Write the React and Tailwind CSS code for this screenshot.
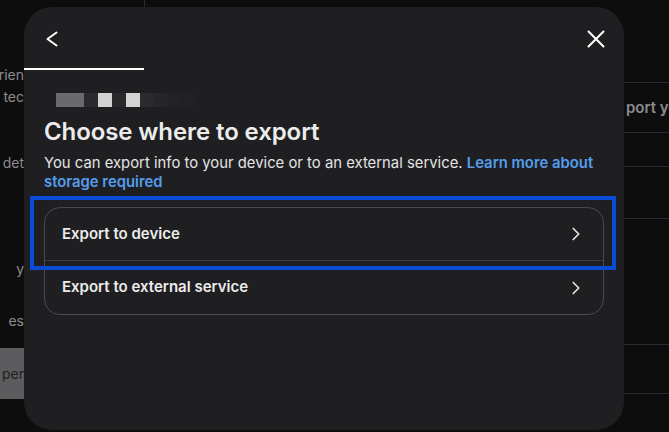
import { ChevronRight } from 'lucide-react';

const PIXELS = ['#6a6a6c', '#2b2b2d', '#d2d2d2', '#29292b', '#d4d4d4', '#2b2b2d', '#262628', '#232325', '#212123'];

function Bg() {
  return (
    <div className="flex h-[432px] w-full bg-[#0d0d0e]">
      {/* left sidebar, mostly hidden */}
      <div className="w-[24px] shrink-0 overflow-hidden text-[14px] text-[#8c8c8e]">
        <div className="h-[64px]" />
        <div className="flex justify-end whitespace-nowrap leading-[22px]">experien</div>
        <div className="flex justify-end whitespace-nowrap leading-[22px]">in tec</div>
        <div className="h-[44px]" />
        <div className="flex justify-end whitespace-nowrap leading-[22px]">Your det</div>
        <div className="h-[84px]" />
        <div className="flex justify-end whitespace-nowrap leading-[22px]">y</div>
        <div className="h-[30px]" />
        <div className="flex justify-end whitespace-nowrap leading-[22px]">es</div>
        <div className="h-[16px]" />
        <div className="flex h-[51px] items-center justify-end whitespace-nowrap bg-[#5c5c5e] text-[#1e1e20]">per</div>
      </div>
      <div className="flex-1">
        <div className="ml-[120px] h-[8px] w-px bg-[#2a2a2c]" />
      </div>
      {/* right column, mostly hidden */}
      <div className="w-[45px] shrink-0 overflow-hidden">
        <div className="h-[82px]" />
        <div className="flex h-[51px] items-center whitespace-nowrap border-y border-[#2a2a2c] pl-[2px] pt-[2px] text-[15px] font-semibold text-[#8c8c8e]">
          port your
        </div>
        <div className="h-[33px]" />
        <div className="h-[53px] border-y border-[#2a2a2c]" />
        <div className="h-[125px]" />
        <div className="h-[50px] border-y border-[#2a2a2c]" />
      </div>
    </div>
  );
}

function Opcion({ label, last }) {
  return (
    <button
      className={`flex h-[53px] w-full items-center justify-between pl-[17px] pr-[16px] text-left ${
        last ? '' : 'border-b border-[#3e3e40]'
      }`}
    >
      <span className="text-[15px] font-semibold text-[#ececed]">{label}</span>
      <ChevronRight size={22} strokeWidth={1.8} className="text-[#e6e6e6]" />
    </button>
  );
}

export default function App() {
  return (
    <div className="relative h-[432px] w-[669px] overflow-hidden font-['Inter',sans-serif]">
      <Bg />

      {/* modal */}
      <div className="absolute left-[24px] top-[7px] h-[423px] w-[600px] rounded-[28px] bg-[#1f1f21]">
        <div className="flex h-[61px] items-center justify-between pl-[22px] pr-[19px] pt-[3px]">
          <svg width="12" height="16" viewBox="0 0 12 16" fill="none" stroke="white" strokeWidth="2" strokeLinecap="round" strokeLinejoin="round">
            <path d="M10.5 1.5 L1.5 8 L10.5 14.5" />
          </svg>
          <svg width="18" height="18" viewBox="0 0 18 18" fill="none" stroke="white" strokeWidth="2" strokeLinecap="round">
            <path d="M1.5 1.5 L16.5 16.5 M16.5 1.5 L1.5 16.5" />
          </svg>
        </div>
        <div className="h-[2px] w-[120px] bg-white" />

        <div className="px-[20px]">
          <div className="ml-[12px] mt-[23px] flex h-[14px]">
            <div className="w-[28px]" style={{ background: PIXELS[0] }} />
            {PIXELS.slice(1).map((c, i) => (
              <div key={i} className="w-[14px]" style={{ background: c }} />
            ))}
          </div>

          <h2 className="mt-[9px] text-[24px] font-semibold leading-[32px] tracking-[-0.1px] text-[#ececed]">
            Choose where to export
          </h2>
          <p className="mt-[6px] text-[14.85px] leading-[19px] text-[#e4e4e6]">
            You can export info to your device or to an external service.{' '}
            <span className="font-semibold text-[#559ded]">Learn more about storage required</span>
          </p>

          <div className="mt-[15px] overflow-hidden rounded-[16px] border border-[#4a4a4c]">
            <Opcion label="Export to device" />
            <Opcion label="Export to external service" last />
          </div>
        </div>
      </div>

      {/* highlight box */}
      <div className="absolute left-[30px] top-[196px] h-[74px] w-[586px] border-[4px] border-[#0b4cd6]" />
    </div>
  );
}
